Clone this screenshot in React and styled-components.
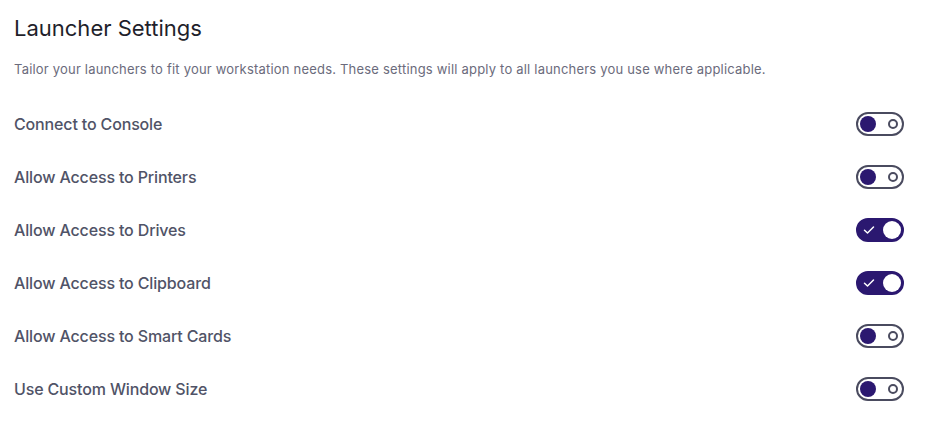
import React, { useState } from 'react'
import styled, { createGlobalStyle } from 'styled-components'

const GlobalStyle = createGlobalStyle`
  body {
    margin: 0;
    background: #ffffff;
    font-family: Inter, "Noto Sans", sans-serif;
  }
`

const Page = styled.div`
  padding: 14px 32px 0 14px;
`

const Title = styled.h1`
  margin: 0;
  font-size: 22px;
  font-weight: 400;
  color: #1f1f2b;
  line-height: 28px;
`

const Subtitle = styled.p`
  margin: 19px 0 0;
  font-size: 13px;
  letter-spacing: 0.2px;
  color: #6b6b7c;
  line-height: 16px;
`

const List = styled.div`
  display: flex;
  flex-direction: column;
  margin-top: 20px;
`

const Row = styled.div`
  display: flex;
  justify-content: space-between;
  align-items: center;
  height: 53px;
`

const Label = styled.span`
  font-size: 16px;
  font-weight: 500;
  letter-spacing: -0.15px;
  color: #505367;
`

const Switch = styled.button`
  width: 48px;
  height: 24px;
  border-radius: 12px;
  cursor: pointer;
  box-sizing: border-box;
  border: 2px solid ${p => (p.$on ? '#2b1870' : '#4a4b5f')};
  background: ${p => (p.$on ? '#2b1870' : '#ffffff')};
  padding: ${p => (p.$on ? '0 1px 0 5px' : '0 4px 0 2px')};
  display: flex;
  align-items: center;
  justify-content: space-between;
`

const Knob = styled.span`
  flex: none;
  border-radius: 50%;
  width: ${p => (p.$on ? '18px' : '16px')};
  height: ${p => (p.$on ? '18px' : '16px')};
  background: ${p => (p.$on ? '#ffffff' : '#2b1870')};
`

const Ring = styled.span`
  flex: none;
  width: 10px;
  height: 10px;
  box-sizing: border-box;
  border: 2px solid #4a4b5f;
  border-radius: 50%;
`

const Toggle = ({ on, onClick }) => (
  <Switch $on={on} onClick={onClick}>
    {on ? (
      <>
        <svg width="12" height="10" viewBox="0 0 12 10">
          <path d="M1.5 5.2 L4.5 8 L10.5 2" stroke="#ffffff" strokeWidth="1.5" fill="none" strokeLinecap="round" strokeLinejoin="round" />
        </svg>
        <Knob $on />
      </>
    ) : (
      <>
        <Knob />
        <Ring />
      </>
    )}
  </Switch>
)

const initial = [
  { label: 'Connect to Console', on: false },
  { label: 'Allow Access to Printers', on: false },
  { label: 'Allow Access to Drives', on: true },
  { label: 'Allow Access to Clipboard', on: true },
  { label: 'Allow Access to Smart Cards', on: false },
  { label: 'Use Custom Window Size', on: false },
]

const App = () => {
  const [items, setItems] = useState(initial)
  const flip = i => setItems(items.map((it, j) => (j === i ? { ...it, on: !it.on } : it)))
  return (
    <Page>
      <GlobalStyle />
      <Title>Launcher Settings</Title>
      <Subtitle>
        Tailor your launchers to fit your workstation needs. These settings will apply to all launchers you use where applicable.
      </Subtitle>
      <List>
        {items.map((it, i) => (
          <Row key={it.label}>
            <Label>{it.label}</Label>
            <Toggle on={it.on} onClick={() => flip(i)} />
          </Row>
        ))}
      </List>
    </Page>
  )
}

export default App
